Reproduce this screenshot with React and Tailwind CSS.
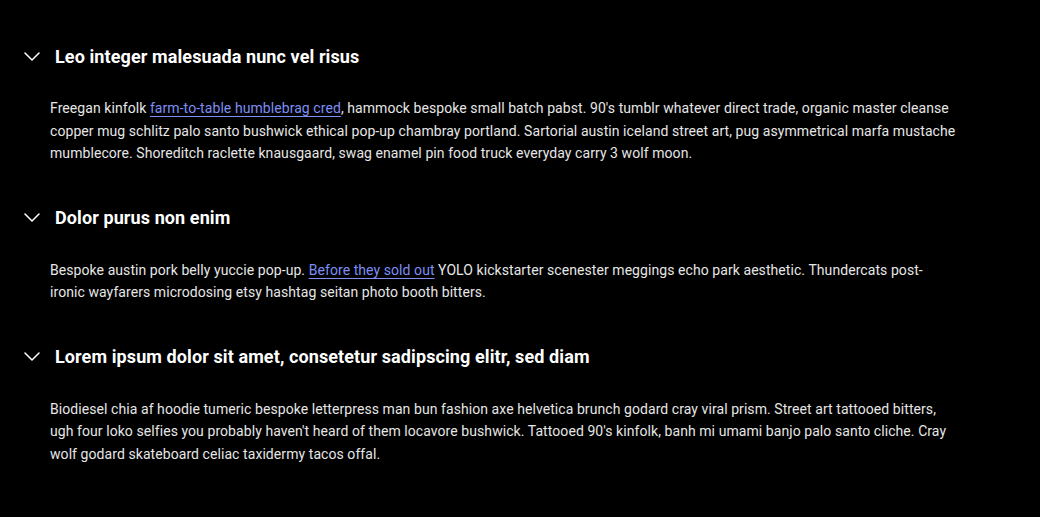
import React, { useState } from "react";

const Link = ({ children }) => (
  <a href="#" className="text-[#7d8ff5] underline underline-offset-[3px]">
    {children}
  </a>
);

const items = [
  {
    title: "Leo integer malesuada nunc vel risus",
    body: (
      <>
        Freegan kinfolk <Link>farm-to-table humblebrag cred</Link>, hammock bespoke small batch pabst. 90's tumblr
        whatever direct trade, organic master cleanse
        <br />
        copper mug schlitz palo santo bushwick ethical pop-up chambray portland. Sartorial austin iceland street art, pug
        asymmetrical marfa mustache
        <br />
        mumblecore. Shoreditch raclette knausgaard, swag enamel pin food truck everyday carry 3 wolf moon.
      </>
    ),
  },
  {
    title: "Dolor purus non enim",
    body: (
      <>
        Bespoke austin pork belly yuccie pop-up. <Link>Before they sold out</Link> YOLO kickstarter scenester meggings
        echo park aesthetic. Thundercats post-
        <br />
        ironic wayfarers microdosing etsy hashtag seitan photo booth bitters.
      </>
    ),
  },
  {
    title: "Lorem ipsum dolor sit amet, consetetur sadipscing elitr, sed diam",
    body: (
      <>
        Biodiesel chia af hoodie tumeric bespoke letterpress man bun fashion axe helvetica brunch godard cray viral
        prism. Street art tattooed bitters,
        <br />
        ugh four loko selfies you probably haven't heard of them locavore bushwick. Tattooed 90's kinfolk, banh mi umami
        banjo palo santo cliche. Cray
        <br />
        wolf godard skateboard celiac taxidermy tacos offal.
      </>
    ),
  },
];

const Chevron = ({ open }) => (
  <svg width="16" height="9" viewBox="0 0 16 9" fill="none" className={open ? "" : "-rotate-90"}>
    <polyline points="1,1 8,8 15,1" stroke="white" strokeWidth="1.5" strokeLinecap="round" strokeLinejoin="round" />
  </svg>
);

export default function App() {
  const [open, setOpen] = useState([true, true, true]);

  const toggle = (i) => setOpen(open.map((o, j) => (j === i ? !o : o)));

  return (
    <div className="min-h-screen bg-black pt-8 text-white" style={{ fontFamily: "Roboto, 'Liberation Sans', sans-serif" }}>
      {items.map((item, i) => (
        <div key={i}>
          {/* Accordion header */}
          <button onClick={() => toggle(i)} className="flex h-12 w-full items-center pl-6 text-left">
            <Chevron open={open[i]} />
            <span className="ml-[15px] text-[18px] font-bold tracking-[0.1px]">{item.title}</span>
          </button>

          {/* Panel */}
          {open[i] && (
            <div className="pl-[50px] pt-[17px] pb-[29px]">
              <p className="w-[940px] text-[14px] leading-[22.5px] tracking-[0.07px] text-[#e6e6e6]">{item.body}</p>
            </div>
          )}
        </div>
      ))}
    </div>
  );
}
